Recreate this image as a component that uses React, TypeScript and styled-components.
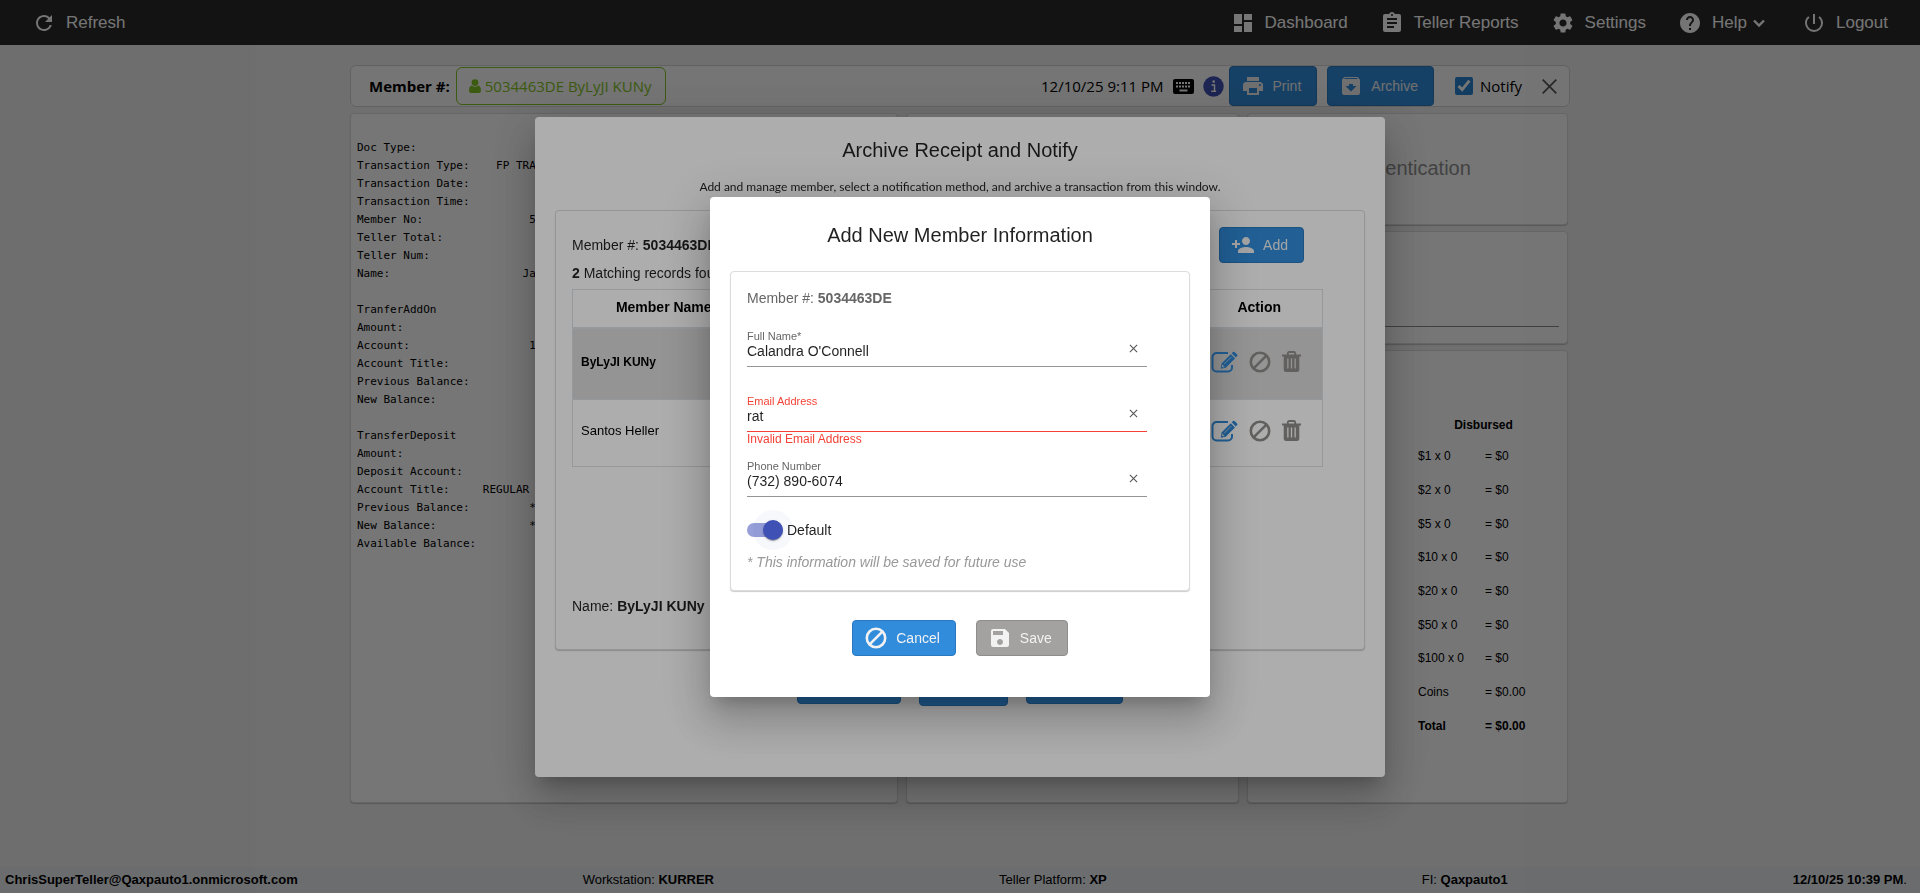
import React, { useState } from 'react';
import styled, { createGlobalStyle } from 'styled-components';
import {
  MdArchive,
  MdAssignment,
  MdDashboard,
  MdHelp,
  MdPersonAdd,
  MdPowerSettingsNew,
  MdPrint,
  MdRefresh,
  MdSave,
  MdSettings,
} from 'react-icons/md';

const sans = '"Liberation Sans", Arial, sans-serif';
const humanist = '"Open Sans", "Noto Sans", sans-serif';
const blue = '#318cdc';

const GlobalStyle = createGlobalStyle`
  *, *::before, *::after { box-sizing: border-box; }
  body {
    margin: 0;
    background: #f0f0f0;
    color: #000;
    font: 14px/20px ${sans};
  }
  button, input { font: inherit; color: inherit; }
  button { cursor: pointer; }
`;

const Page = styled.div`
  display: flex;
  flex-direction: column;
  min-height: 100vh;
`;

/* ---------- top navigation ---------- */

const TopBar = styled.header`
  display: flex;
  justify-content: space-between;
  align-items: center;
  height: 45px;
  padding: 0 32px;
  background: #2b2b2b;
`;

const NavGroup = styled.nav`
  display: flex;
  gap: 32px;
`;

const NavLink = styled.a`
  display: flex;
  align-items: center;
  gap: 10px;
  color: #fff;
  font-size: 17px;
  line-height: 24px;
  text-decoration: none;
`;

const WithChevron = styled.span`
  display: flex;
  align-items: center;
  gap: 5px;
  padding-right: 4px;
`;

/* ---------- member bar ---------- */

const Main = styled.main`
  flex: 1;
  display: flex;
  flex-direction: column;
  gap: 6px;
  width: 100%;
  max-width: 1220px;
  margin: 0 auto;
  padding-top: 20px;
`;

const MemberBar = styled.section`
  display: flex;
  align-items: center;
  height: 42px;
  padding: 0 11px 0 18px;
  border: 1px solid #d4d4d4;
  border-radius: 6px;
  background: #fcfcfc;
  font-family: ${humanist};
  font-size: 15px;
`;

const MemberLabel = styled.strong`
  margin-right: 6px;
`;

const MemberPill = styled.button`
  display: flex;
  align-items: center;
  gap: 4px;
  height: 38px;
  padding: 0 13px 0 12px;
  border: 1px solid #84c225;
  border-radius: 6px;
  background: none;
  color: #84c225;
`;

const BarEnd = styled.div`
  display: flex;
  align-items: center;
  gap: 9px;
  margin-left: auto;
`;

const InfoButton = styled.button`
  display: flex;
  padding: 0;
  border: 0;
  background: none;
`;

const BarButtons = styled.div`
  display: flex;
  gap: 10px;
  margin-left: -4px;
`;

const NotifyLabel = styled.label`
  display: flex;
  align-items: center;
  gap: 7px;
  margin-left: 12px;
`;

const NotifyBox = styled.input`
  width: 18px;
  height: 18px;
  margin: 0;
  accent-color: #2a82d2;
`;

const CloseButton = styled.button`
  display: flex;
  margin-left: 10px;
  padding: 0;
  border: 0;
  background: none;
`;

/* ---------- buttons ---------- */

const ActionButton = styled.button<{ $tall?: boolean }>`
  display: flex;
  align-items: center;
  gap: 8px;
  height: ${(p) => (p.$tall ? 40 : 36)}px;
  padding: 0 15px 0 11px;
  border: 1px solid #2a79bf;
  border-radius: 4px;
  background: ${blue};
  color: #f2f2f2;
  font-family: ${sans};
  font-size: 14px;
  font-weight: 500;

  &:disabled {
    border-color: #8f8e8d;
    background: #a3a2a0;
    cursor: default;
  }
`;

/* ---------- cards ---------- */

const Card = styled.section`
  border: 1px solid #dcdcdc;
  border-radius: 4px;
  background: #fff;
  box-shadow: 0 1px 1px rgba(0, 0, 0, 0.2);
`;

const Columns = styled.div`
  display: grid;
  grid-template-columns: 548fr 333fr 321fr;
  gap: 8px;
  min-height: 690px;
  padding-right: 2px;
`;

const ReceiptCard = styled(Card)`
  padding: 25px 6px 24px;
  overflow: hidden;
`;

const Receipt = styled.pre`
  margin: 0;
  font: 11px/18px "DejaVu Sans Mono", monospace;
`;

const SideColumn = styled.div`
  display: flex;
  flex-direction: column;
  gap: 6px;
`;

const AuthCard = styled(Card)`
  display: flex;
  align-items: center;
  justify-content: center;
  height: 112px;
  padding-bottom: 2px;
`;

const AuthTitle = styled.h2`
  margin: 0;
  color: #8f8f8f;
  font-size: 20px;
  font-weight: 400;
`;

const SignatureCard = styled(Card)`
  display: flex;
  align-items: flex-end;
  height: 113px;
  padding: 0 8px 16px;
`;

const SignatureLine = styled.hr`
  flex: 1;
  margin: 0;
  border: 0;
  border-top: 1px solid #8c8c8c;
`;

const CashCard = styled(Card)`
  flex: 1;
  display: flex;
  justify-content: flex-end;
  align-items: flex-start;
  padding: 60px 18px 0 0;
`;

const CashTable = styled.table`
  width: 131px;
  border-collapse: collapse;
  font-size: 12px;
  line-height: 16px;
  text-align: left;

  thead th { height: 28px; text-align: center; }
  td, tbody th { padding: 0; height: 34px; }
  td:first-child { width: 67px; }
  tbody tr:nth-child(3n) td { height: 33px; }
  tbody tr:last-child td { font-weight: 700; }
`;

/* ---------- status bar ---------- */

const StatusBar = styled.footer`
  display: flex;
  justify-content: space-between;
  align-items: center;
  height: 26px;
  padding: 0 13px 0 5px;
  background: #e8ebf0;
  font-size: 13px;
`;

const StatusInset = styled.span`
  padding-left: 30px;
`;

/* ---------- dialogs ---------- */

const Backdrop = styled.div`
  position: fixed;
  inset: 0;
  display: flex;
  align-items: center;
  justify-content: center;
  background: rgba(0, 0, 0, 0.32);
`;

const Dialog = styled.div<{ $width: number; $minHeight: number }>`
  display: flex;
  flex-direction: column;
  width: ${(p) => p.$width}px;
  max-width: 100%;
  min-height: ${(p) => p.$minHeight}px;
  padding: 17px 20px;
  border-radius: 4px;
  background: #fff;
  color: rgba(0, 0, 0, 0.87);
  box-shadow: 0 11px 15px -7px rgba(0, 0, 0, 0.2), 0 24px 38px 3px rgba(0, 0, 0, 0.14),
    0 9px 46px 8px rgba(0, 0, 0, 0.12);
`;

const MemberDialog = styled(Dialog)`
  padding-top: 22px;
`;

const DialogTitle = styled.h2`
  margin: 0;
  font-size: 20px;
  font-weight: 400;
  line-height: 32px;
  text-align: center;
`;

const DialogHint = styled.p`
  margin: 12px 0 14px;
  font: 12px/18px Lato, ${humanist};
  text-align: center;
`;

const DialogActions = styled.div<{ $top: number; $gap: number }>`
  display: flex;
  align-items: center;
  justify-content: center;
  gap: ${(p) => p.$gap}px;
  margin-top: ${(p) => p.$top}px;
`;

const RecordsCard = styled(Card)`
  min-height: 440px;
  padding: 16px 41px 16px 16px;
`;

const RecordsHead = styled.div`
  display: flex;
  align-items: center;
  justify-content: space-between;
  padding-right: 19px;
`;

const RecordsTable = styled.table`
  width: 100%;
  margin: 6px 0 129px;
  border: 1px solid #dee2e6;
  border-collapse: collapse;
  table-layout: fixed;
  color: #000;

  th { height: 39px; padding: 0 0 2px; border-bottom: 2px solid #dee2e6; }
  th:first-child { width: 182px; }
  th:last-child { width: 126px; }
`;

const RecordRow = styled.tr<{ $selected?: boolean }>`
  background: ${(p) => (p.$selected ? '#dadada' : 'transparent')};
  font-size: ${(p) => (p.$selected ? 12 : 13)}px;
  font-weight: ${(p) => (p.$selected ? 700 : 400)};

  td {
    height: ${(p) => (p.$selected ? 71 : 67)}px;
    padding: 0 8px 4px;
    border-top: 1px solid #dee2e6;
  }
`;

const RowActions = styled.div`
  display: flex;
  align-items: center;
  gap: 10px;
  padding-left: 6px;
`;

const IconButton = styled.button<{ $color: string }>`
  display: flex;
  padding: 0;
  border: 0;
  background: none;
  color: ${(p) => p.$color};
`;

/* ---------- member form ---------- */

const FormCard = styled(Card)`
  margin-top: 20px;
  padding: 16px 16px 18px;
`;

const FormMember = styled.p`
  margin: 0 0 21px;
  color: #666;
`;

const Fields = styled.div`
  display: flex;
  flex-direction: column;
  gap: 13px;
  width: 400px;
  max-width: 100%;
`;

const FieldBox = styled.div`
  min-height: 52px;
`;

const FieldLine = styled.div<{ $error?: boolean }>`
  display: grid;
  grid-template-columns: 1fr 27px;
  grid-template-rows: 14px 23px;
  align-items: start;
  border-bottom: 1px solid ${(p) => (p.$error ? '#f44336' : '#949494')};
`;

const FieldLabel = styled.label<{ $error?: boolean }>`
  color: ${(p) => (p.$error ? '#f44336' : '#666')};
  font-size: 11px;
  line-height: 14px;
`;

const FieldInput = styled.input`
  grid-row: 2;
  width: 100%;
  height: 17px;
  padding: 0;
  border: 0;
  outline: 0;
  background: none;
`;

const ClearButton = styled(IconButton)`
  grid-area: 1 / 2 / 3 / 3;
  align-self: center;
  justify-content: center;
  padding-top: 3px;
`;

const FieldError = styled.p`
  margin: 0;
  color: #f44336;
  font-size: 12px;
  line-height: 14px;
`;

const ToggleLabel = styled.label`
  display: flex;
  align-items: center;
  gap: 4px;
  width: fit-content;
  height: 24px;
  margin: 7px 0 10px;
`;

const Toggle = styled.input`
  position: relative;
  width: 36px;
  height: 14px;
  margin: 0;
  border-radius: 7px;
  appearance: none;
  background: #bdbdbd;

  &::after {
    content: '';
    position: absolute;
    top: -3px;
    left: 0;
    width: 20px;
    height: 20px;
    border-radius: 50%;
    background: #fafafa;
    box-shadow: 0 2px 1px -1px rgba(0, 0, 0, 0.2), 0 1px 1px rgba(0, 0, 0, 0.14),
      0 1px 3px rgba(0, 0, 0, 0.12), 0 0 0 10px rgba(63, 81, 181, 0.04);
  }
  &:checked { background: #979fd9; }
  &:checked::after { left: 16px; background: #3f51b5; }
`;

const FormNote = styled.p`
  margin: 0;
  color: #999;
  font-style: italic;
`;

/* ---------- icons ---------- */

const BanIcon = ({ size = 24 }: { size?: number }) => (
  <svg width={size} height={size} viewBox="0 0 24 24" fill="none" stroke="currentColor" strokeWidth="2.6" aria-hidden="true">
    <circle cx="12" cy="12" r="9.2" />
    <path d="M5.6 18.4 18.4 5.6" />
  </svg>
);

const CloseIcon = ({ size, stroke, color }: { size: number; stroke: number; color: string }) => (
  <svg width={size} height={size} viewBox="0 0 10 10" fill="none" stroke={color} strokeWidth={stroke} aria-hidden="true">
    <path d="M1 1l8 8M9 1 1 9" />
  </svg>
);

const EditIcon = () => (
  <svg width="27" height="22" viewBox="0 0 27 22" aria-hidden="true">
    <path
      d="M17 2H5.5A4 4 0 0 0 1.500 6v10.500a4 4 0 0 0 4 4h11.500a4 4 0 0 0 4-4v-2.500"
      fill="none"
      stroke="currentColor"
      strokeWidth="2"
    />
    <path fill="currentColor" d="M10.500 12.500 19.800 3.200l4.200 4.200-9.300 9.300-5 1 .8-5.200zM20.700 2.300l1.300-1.300q.8-.7 1.600 0l2.500 2.500q.8.800 0 1.600l-1.300 1.300z" />
    <path d="M13 13.300 20.300 6" stroke="#b8cfe2" strokeWidth="1" />
    <path fill="#dadada" d="M11.200 13.600l2.400 2.400-1.700.5-1.200-1.200z" />
  </svg>
);

const TrashIcon = () => (
  <svg width="19" height="21" viewBox="0 0 19 21" aria-hidden="true">
    <path d="M5.800 4V2.500q0-1.500 1.500-1.500h4.400q1.500 0 1.500 1.500V4" fill="none" stroke="currentColor" strokeWidth="1.800" />
    <path d="M0 3.500h19v2H0z" fill="currentColor" />
    <path
      fillRule="evenodd"
      fill="currentColor"
      d="M1.700 5h15.600v13.500q0 2.500-2.500 2.500H4.200q-2.500 0-2.500-2.500zM5.200 7.500v10h1.300v-10zM8.850 7.500v10h1.300v-10zM12.500 7.500v10h1.300v-10z"
    />
  </svg>
);

const UserIcon = () => (
  <svg width="12" height="14" viewBox="0 0 12 14" fill="currentColor" aria-hidden="true">
    <circle cx="6" cy="3.600" r="3.400" />
    <path d="M2.800 6.500Q6 9 9.200 6.500 12 7.300 12 11.500q0 2.500-2.300 2.500H2.300Q0 14 0 11.500 0 7.300 2.800 6.500z" />
  </svg>
);

const KeyboardIcon = () => (
  <svg width="21" height="15" viewBox="0 0 21 15" aria-hidden="true">
    <rect width="21" height="15" rx="2" />
    <path d="M3 4h15M3 7.500h15" stroke="#fcfcfc" strokeWidth="2" strokeDasharray="2 1" />
    <path d="M6.500 11.500h8" stroke="#fcfcfc" strokeWidth="2" />
  </svg>
);

const ChevronIcon = () => (
  <svg width="14" height="14" viewBox="0 0 14 14" fill="none" stroke="currentColor" strokeWidth="2.400" aria-hidden="true">
    <path d="M2 4.500l5 5 5-5" />
  </svg>
);

const InfoIcon = () => (
  <svg width="21" height="21" viewBox="0 0 21 21" aria-hidden="true">
    <circle cx="10.500" cy="10.500" r="10.200" fill="#3f51b5" />
    <path d="M8.500 9h3v6M8.300 15.200h4.800" fill="none" stroke="#fff" strokeWidth="1.500" />
    <circle cx="10.700" cy="5.600" r="1.300" fill="#fff" />
  </svg>
);

/* ---------- data ---------- */

const receiptText = [
  'Doc Type:',
  'Transaction Type:    FP TRA',
  'Transaction Date:',
  'Transaction Time:',
  'Member No:                5',
  'Teller Total:',
  'Teller Num:',
  'Name:                    Ja',
  '',
  'TranferAddOn',
  'Amount:',
  'Account:                  1',
  'Account Title:',
  'Previous Balance:',
  'New Balance:',
  '',
  'TransferDeposit',
  'Amount:',
  'Deposit Account:',
  'Account Title:     REGULAR',
  'Previous Balance:         *',
  'New Balance:              *',
  'Available Balance:',
].join('\n');

const cash: [string, string][] = [
  ['$1 x 0', '= $0'],
  ['$2 x 0', '= $0'],
  ['$5 x 0', '= $0'],
  ['$10 x 0', '= $0'],
  ['$20 x 0', '= $0'],
  ['$50 x 0', '= $0'],
  ['$100 x 0', '= $0'],
  ['Coins', '= $0.00'],
  ['Total', '= $0.00'],
];

const members = ['ByLyJI KUNy', 'Santos Heller'];

type FieldProps = {
  id: string;
  label: string;
  value: string;
  error?: string;
  onChange: (value: string) => void;
};

const Field = ({ id, label, value, error, onChange }: FieldProps) => (
  <FieldBox>
    <FieldLine $error={!!error}>
      <FieldLabel htmlFor={id} $error={!!error}>{label}</FieldLabel>
      <FieldInput id={id} value={value} onChange={(e) => onChange(e.target.value)} />
      <ClearButton type="button" $color="#666" aria-label={`Clear ${label}`} onClick={() => onChange('')}>
        <CloseIcon size={9} stroke={1.2} color="#555" />
      </ClearButton>
    </FieldLine>
    {error && <FieldError>{error}</FieldError>}
  </FieldBox>
);

const MemberForm = () => {
  const [name, setName] = useState("Calandra O'Connell");
  const [email, setEmail] = useState('rat');
  const [phone, setPhone] = useState('(732) 890-6074');
  const emailError = email && !/^\S+@\S+\.\S+$/.test(email) ? 'Invalid Email Address' : undefined;

  return (
    <MemberDialog role="dialog" aria-labelledby="member-title" $width={500} $minHeight={500}>
      <DialogTitle id="member-title">Add New Member Information</DialogTitle>
      <FormCard>
        <FormMember>Member #: <strong>5034463DE</strong></FormMember>
        <Fields>
          <Field id="name" label="Full Name*" value={name} onChange={setName} />
          <Field id="email" label="Email Address" value={email} error={emailError} onChange={setEmail} />
          <Field id="phone" label="Phone Number" value={phone} onChange={setPhone} />
        </Fields>
        <ToggleLabel>
          <Toggle type="checkbox" role="switch" defaultChecked />
          Default
        </ToggleLabel>
        <FormNote>* This information will be saved for future use</FormNote>
      </FormCard>
      <DialogActions $top={29} $gap={20}>
        <ActionButton type="button"><BanIcon />Cancel</ActionButton>
        <ActionButton type="button" disabled={!!emailError}><MdSave size={24} />Save</ActionButton>
      </DialogActions>
    </MemberDialog>
  );
};

const ArchiveDialog = () => (
  <Dialog role="dialog" aria-labelledby="archive-title" $width={850} $minHeight={660}>
    <DialogTitle id="archive-title">Archive Receipt and Notify</DialogTitle>
    <DialogHint>
      Add and manage member, select a notification method, and archive a transaction from this window.
    </DialogHint>
    <RecordsCard>
      <RecordsHead>
        <span>Member #: <strong>5034463DE</strong></span>
        <ActionButton type="button"><MdPersonAdd size={24} />Add</ActionButton>
      </RecordsHead>
      <div><strong>2</strong> Matching records found</div>
      <RecordsTable>
        <thead>
          <tr>
            <th>Member Name</th>
            <th>Email Address</th>
            <th>Phone Number</th>
            <th>Action</th>
          </tr>
        </thead>
        <tbody>
          {members.map((name, i) => (
            <RecordRow key={name} $selected={i === 0}>
              <td>{name}</td>
              <td />
              <td />
              <td>
                <RowActions>
                  <IconButton type="button" $color={blue} aria-label={`Edit ${name}`}><EditIcon /></IconButton>
                  <IconButton type="button" $color="#8f8e8b" aria-label={`Disable ${name}`}><BanIcon /></IconButton>
                  <IconButton type="button" $color="#8f8e8b" aria-label={`Delete ${name}`}><TrashIcon /></IconButton>
                </RowActions>
              </td>
            </RecordRow>
          ))}
        </tbody>
      </RecordsTable>
      <div>Name: <strong>ByLyJI KUNy</strong></div>
    </RecordsCard>
    <DialogActions $top={16} $gap={18}>
      <ActionButton type="button"><BanIcon />Cancel</ActionButton>
      <ActionButton type="button" $tall><MdPrint size={24} />Print</ActionButton>
      <ActionButton type="button"><MdArchive size={24} />Finish</ActionButton>
    </DialogActions>
  </Dialog>
);

export default function App() {
  return (
    <>
      <GlobalStyle />
      <Page>
        <TopBar>
          <NavLink href="#refresh"><MdRefresh size={24} />Refresh</NavLink>
          <NavGroup>
            <NavLink href="#dashboard"><MdDashboard size={24} />Dashboard</NavLink>
            <NavLink href="#reports"><MdAssignment size={24} />Teller Reports</NavLink>
            <NavLink href="#settings"><MdSettings size={24} />Settings</NavLink>
            <NavLink href="#help">
              <MdHelp size={24} />
              <WithChevron>Help<ChevronIcon /></WithChevron>
            </NavLink>
            <NavLink href="#logout"><MdPowerSettingsNew size={24} />Logout</NavLink>
          </NavGroup>
        </TopBar>

        <Main>
          <MemberBar>
            <MemberLabel>Member #:</MemberLabel>
            <MemberPill type="button"><UserIcon />5034463DE ByLyJI KUNy</MemberPill>
            <BarEnd>
              <time>12/10/25 9:11 PM</time>
              <KeyboardIcon />
              <InfoButton type="button" aria-label="Information"><InfoIcon /></InfoButton>
              <BarButtons>
                <ActionButton type="button" $tall><MdPrint size={24} />Print</ActionButton>
                <ActionButton type="button" $tall><MdArchive size={24} />Archive</ActionButton>
              </BarButtons>
              <NotifyLabel><NotifyBox type="checkbox" defaultChecked />Notify</NotifyLabel>
              <CloseButton type="button" aria-label="Close"><CloseIcon size={17} stroke={1} color="#555" /></CloseButton>
            </BarEnd>
          </MemberBar>

          <Columns>
            <ReceiptCard><Receipt>{receiptText}</Receipt></ReceiptCard>
            <Card />
            <SideColumn>
              <AuthCard><AuthTitle>Authentication</AuthTitle></AuthCard>
              <SignatureCard><SignatureLine /></SignatureCard>
              <CashCard>
                <CashTable>
                  <thead><tr><th colSpan={2}>Disbursed</th></tr></thead>
                  <tbody>
                    {cash.map(([unit, amount]) => (
                      <tr key={unit}><td>{unit}</td><td>{amount}</td></tr>
                    ))}
                  </tbody>
                </CashTable>
              </CashCard>
            </SideColumn>
          </Columns>
        </Main>

        <StatusBar>
          <strong>ChrisSuperTeller@Qaxpauto1.onmicrosoft.com</strong>
          <span>Workstation: <strong>KURRER</strong></span>
          <span>Teller Platform: <strong>XP</strong></span>
          <StatusInset>FI: <strong>Qaxpauto1</strong></StatusInset>
          <span><strong>12/10/25 10:39 PM</strong>.</span>
        </StatusBar>
      </Page>

      <Backdrop><ArchiveDialog /></Backdrop>
      <Backdrop><MemberForm /></Backdrop>
    </>
  );
}
